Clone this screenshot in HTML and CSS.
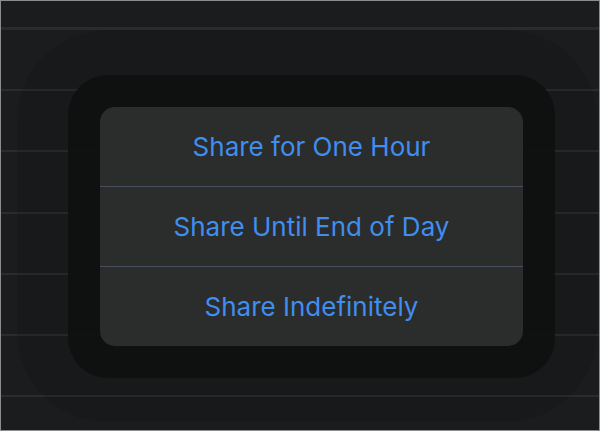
FILE: index.html
```html
<!DOCTYPE html>
<html>

<head>
  <meta charset="UTF-8">
  <title>Share Location</title>
  <link rel="stylesheet" href="styles.css">
</head>

<body>
  <div class="screen">
    <div class="halo">
      <div class="panel">
        <ul class="sheet">
          <li class="option">Share for One Hour</li>
          <li class="option">Share Until End of Day</li>
          <li class="option">Share Indefinitely</li>
        </ul>
      </div>
    </div>
  </div>
</body>

</html>
```

FILE: styles.css
```css
body {
  margin: 0;
  font-family: Inter, "Liberation Sans", sans-serif;
}

ul,
li {
  margin: 0;
  padding: 0;
  list-style: none;
}

.screen {
  box-sizing: border-box;
  width: 600px;
  height: 431px;
  overflow: hidden;
  padding: 29px 0 0 16px;
  border: 1px solid #8d8d8d;
  background-color: #1b1c1e;
  background-image: repeating-linear-gradient(to bottom, #2a2b2d 0, #2a2b2d 2px, transparent 2px, transparent 61.2px);
  background-position: 0 27px;
}

.halo {
  box-sizing: border-box;
  width: 580px;
  height: 392px;
  padding: 45px 0 0 51px;
  border-radius: 90px;
  background: rgba(0, 0, 0, .08);
}

.panel {
  box-sizing: border-box;
  display: flex;
  justify-content: center;
  align-items: center;
  width: 487px;
  height: 303px;
  border-radius: 40px;
  background: rgba(14, 16, 15, .88);
}

.sheet {
  width: 423px;
  border-radius: 15px;
  background: #2b2c2c;
  overflow: hidden;
}

.option {
  display: flex;
  justify-content: center;
  align-items: center;
  height: 79px;
  font-size: 26px;
  color: #3f8ef0;
}

.option + .option {
  border-top: 1px solid #474d5a;
}
```
